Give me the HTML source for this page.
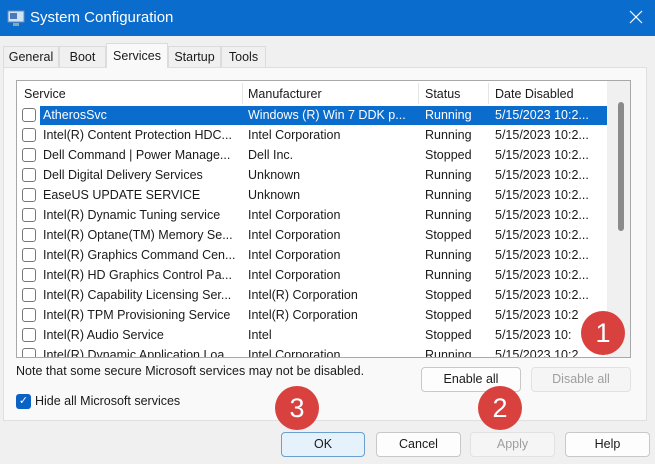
<!DOCTYPE html><html><head><style>
body{margin:0;width:655px;height:464px;background:#f0f0f0;font-family:"Liberation Sans",sans-serif;font-size:12.5px;color:#1a1a1a;position:relative;overflow:hidden}
.a{position:absolute}
.title{left:0;top:0;width:655px;height:36px;background:#0a6ccc;color:#fff;font-size:15px}
.tab{top:46px;height:21px;border:1px solid #dcdcdc;border-bottom:none;background:#f0f0f0;line-height:21px;text-align:center;box-sizing:border-box}
.panel{left:3px;top:67px;width:644px;height:354px;background:#f9f9f9;border:1px solid #dfdfdf;box-sizing:border-box}
.list{left:16px;top:80px;width:615px;height:278px;background:#fff;border:1px solid #a8a8a8;box-sizing:border-box;overflow:hidden}
.row{position:absolute;left:0;height:20px;width:590px;line-height:19px}
.row span{position:absolute;white-space:nowrap}
.cb{position:absolute;left:5px;top:2px;width:14px;height:14px;border:1px solid #777;border-radius:3px;background:#fff;box-sizing:border-box}
.btn{height:25px;border:1px solid #c8c8c8;border-radius:4px;background:#fdfdfd;box-sizing:border-box;text-align:center;line-height:23px}
.dis{color:#9e9e9e;background:#f5f5f5;border-color:#e2e2e2}
.c{width:44px;height:44px;border-radius:50%;background:#d9413f;color:#fff;font-size:27px;text-align:center;line-height:44px}
</style></head><body>
<div class="a title"><svg class="a" style="left:7px;top:9px" width="18" height="18"><rect x="1" y="2" width="16" height="11" fill="#cfe3f7" stroke="#6c8db3"/><rect x="3" y="4" width="7" height="6" fill="#4a78b8"/><rect x="6" y="14" width="6" height="3" fill="#8aa"/></svg><span class="a" style="left:30px;top:9px">System Configuration</span><svg class="a" style="left:629px;top:10px" width="14" height="14"><path d="M1 1L13 13M13 1L1 13" stroke="#fff" stroke-width="1.2"/></svg></div>
<div class="a panel"></div>
<div class="a tab" style="left:3px;width:56px">General</div>
<div class="a tab" style="left:59px;width:47px">Boot</div>
<div class="a tab" style="left:106px;width:62px;top:43px;height:25px;background:#f9f9f9;line-height:25px;z-index:2">Services</div>
<div class="a tab" style="left:168px;width:53px">Startup</div>
<div class="a tab" style="left:221px;width:45px">Tools</div>
<div class="a list">
<div class="row" style="top:3px;height:21px;line-height:21px"><span style="left:7px">Service</span><span style="left:231px">Manufacturer</span><span style="left:408px">Status</span><span style="left:478px">Date Disabled</span></div>
<div class="a" style="left:225px;top:2px;width:1px;height:21px;background:#e5e5e5"></div>
<div class="a" style="left:401px;top:2px;width:1px;height:21px;background:#e5e5e5"></div>
<div class="a" style="left:471px;top:2px;width:1px;height:21px;background:#e5e5e5"></div>
<div class="a" style="left:590px;top:0;width:23px;height:276px;background:#f0f0f0"></div>
<div class="a" style="left:601px;top:21px;width:6px;height:129px;background:#8a8a8a;border-radius:3px"></div>
<div id="rows"></div>
</div>
<div class="a" style="left:16px;top:364px">Note that some secure Microsoft services may not be disabled.</div>
<div class="a" style="left:16px;top:394px;width:15px;height:15px;background:#0a62c4;border-radius:3px;color:#fff;font-size:11px;text-align:center;line-height:15px">✓</div>
<div class="a" style="left:35px;top:394px">Hide all Microsoft services</div>
<div class="a btn" style="left:421px;top:367px;width:100px">Enable all</div>
<div class="a btn dis" style="left:531px;top:367px;width:100px">Disable all</div>
<div class="a btn" style="left:281px;top:432px;width:84px;background:#e5f1fb;border-color:#6b9fd0">OK</div>
<div class="a btn" style="left:376px;top:432px;width:85px">Cancel</div>
<div class="a btn dis" style="left:470px;top:432px;width:85px">Apply</div>
<div class="a btn" style="left:565px;top:432px;width:85px">Help</div>
<div class="a c" style="left:581px;top:311px">1</div>
<div class="a c" style="left:478px;top:386px">2</div>
<div class="a c" style="left:275px;top:386px">3</div>
<script>
var d=[["AtherosSvc","Windows (R) Win 7 DDK p...","Running","5/15/2023 10:2..."],
["Intel(R) Content Protection HDC...","Intel Corporation","Running","5/15/2023 10:2..."],
["Dell Command | Power Manage...","Dell Inc.","Stopped","5/15/2023 10:2..."],
["Dell Digital Delivery Services","Unknown","Running","5/15/2023 10:2..."],
["EaseUS UPDATE SERVICE","Unknown","Running","5/15/2023 10:2..."],
["Intel(R) Dynamic Tuning service","Intel Corporation","Running","5/15/2023 10:2..."],
["Intel(R) Optane(TM) Memory Se...","Intel Corporation","Stopped","5/15/2023 10:2..."],
["Intel(R) Graphics Command Cen...","Intel Corporation","Running","5/15/2023 10:2..."],
["Intel(R) HD Graphics Control Pa...","Intel Corporation","Running","5/15/2023 10:2..."],
["Intel(R) Capability Licensing Ser...","Intel(R) Corporation","Stopped","5/15/2023 10:2..."],
["Intel(R) TPM Provisioning Service","Intel(R) Corporation","Stopped","5/15/2023 10:2"],
["Intel(R) Audio Service","Intel","Stopped","5/15/2023 10:"],
["Intel(R) Dynamic Application Loa...","Intel Corporation","Running","5/15/2023 10:2"]];
var h="";d.forEach(function(r,i){var s=i==0;h+='<div class="row" style="top:'+(25+i*20)+'px'+(s?';color:#fff':'')+'">'+(s?'<div class="a" style="left:23px;top:0px;width:567px;height:19px;background:#0a6ccc"></div>':'')+'<div class="cb"></div><span style="left:26px">'+r[0]+'</span><span style="left:231px">'+r[1]+'</span><span style="left:408px">'+r[2]+'</span><span style="left:478px">'+r[3]+'</span></div>'});
document.getElementById("rows").innerHTML=h;
</script>
</body></html>
